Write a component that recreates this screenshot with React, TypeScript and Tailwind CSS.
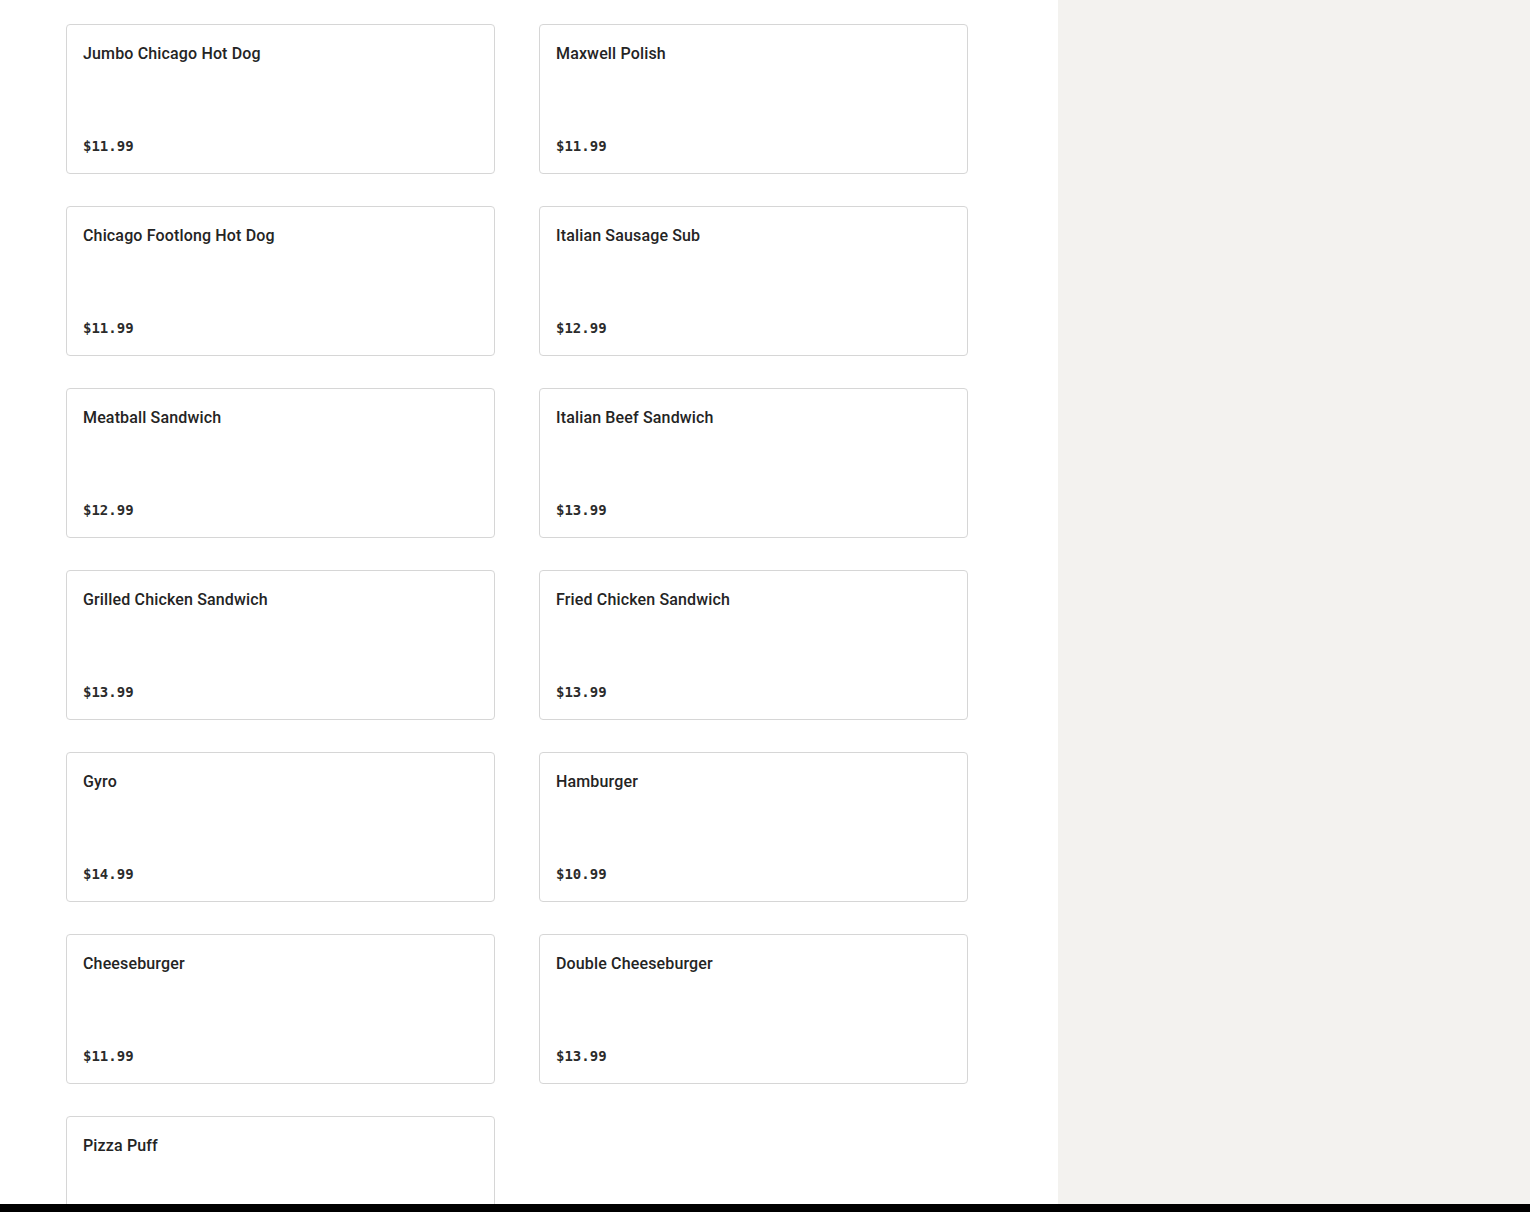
import React from 'react';

interface MenuItem {
	name: string;
	price: string;
}

const ITEMS: MenuItem[] = [
	{ name: 'Jumbo Chicago Hot Dog', price: '$11.99' },
	{ name: 'Maxwell Polish', price: '$11.99' },
	{ name: 'Chicago Footlong Hot Dog', price: '$11.99' },
	{ name: 'Italian Sausage Sub', price: '$12.99' },
	{ name: 'Meatball Sandwich', price: '$12.99' },
	{ name: 'Italian Beef Sandwich', price: '$13.99' },
	{ name: 'Grilled Chicken Sandwich', price: '$13.99' },
	{ name: 'Fried Chicken Sandwich', price: '$13.99' },
	{ name: 'Gyro', price: '$14.99' },
	{ name: 'Hamburger', price: '$10.99' },
	{ name: 'Cheeseburger', price: '$11.99' },
	{ name: 'Double Cheeseburger', price: '$13.99' },
	{ name: 'Pizza Puff', price: '$9.99' },
];

function ItemCard({ item }: { item: MenuItem }) {
	return (
		<div className="flex h-[150px] flex-col justify-between rounded-[4px] border border-[#d6d6d6] bg-white px-4 pt-[17px] pb-[17px]">
			<h3 className="text-[16px] leading-6 font-medium tracking-[0.15px] text-[#242424] [font-family:Roboto,'Liberation_Sans',sans-serif]">
				{item.name}
			</h3>
			<span className="text-[14px] leading-5 font-bold text-[#2b2b2b] [font-family:'DejaVu_Sans_Mono',monospace]">
				{item.price}
			</span>
		</div>
	);
}

export default function App() {
	return (
		<div className="flex h-[1212px] flex-col overflow-hidden bg-white">
			<div className="flex flex-1 overflow-hidden">
				<main className="w-[1058px] shrink-0 px-[66px] pt-6">
					<div className="grid w-[902px] grid-cols-2 gap-x-[44px] gap-y-8">
						{ITEMS.map((item) => (
							<ItemCard key={item.name} item={item} />
						))}
					</div>
				</main>
				<aside className="flex-1 bg-[#f3f2ef]" />
			</div>
			<div className="h-2 bg-black" />
		</div>
	);
}
